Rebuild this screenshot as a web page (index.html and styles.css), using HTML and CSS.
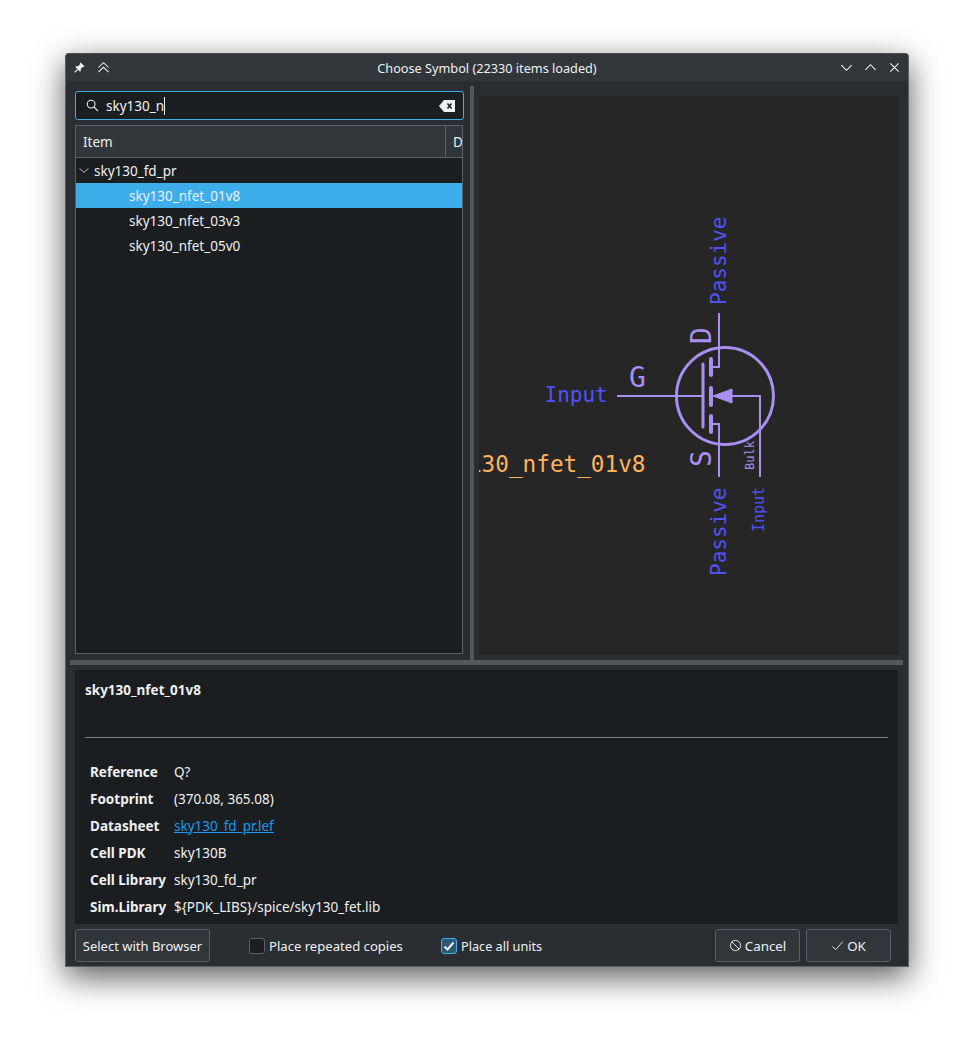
FILE: index.html
```html
<!DOCTYPE html>
<html lang="en">
<head>
  <meta charset="UTF-8" />
  <title>Choose Symbol</title>
  <link rel="stylesheet" href="styles.css">
</head>
<body>
  <div class="window">
    <div class="titlebar">
      <div class="title-side">
        <svg class="tb-icon" viewBox="0 0 14 14"><path d="M8.2 1.5 12.5 5.8 11.6 6.5 10.8 6.2 8.3 8.7 8.4 10.8 7.5 11.5 2.5 6.5 3.2 5.6 5.3 5.7 7.8 3.2 7.5 2.4Z" fill="#eff0f1"/><path d="M5 9 1.8 12.2" stroke="#eff0f1" stroke-width="1.2" fill="none"/></svg>
        <svg class="tb-icon" viewBox="0 0 14 14"><path d="M1.5 7 7 1.8 12.5 7M1.5 12 7 6.8 12.5 12" stroke="#eff0f1" stroke-width="1.1" fill="none"/></svg>
      </div>
      <div class="title-text">Choose Symbol (22330 items loaded)</div>
      <div class="title-side title-right">
        <svg class="tb-icon" viewBox="0 0 14 14"><path d="M1.5 4.5 7 10 12.5 4.5" stroke="#eff0f1" stroke-width="1.2" fill="none"/></svg>
        <svg class="tb-icon" viewBox="0 0 14 14"><path d="M1.5 9.5 7 4 12.5 9.5" stroke="#eff0f1" stroke-width="1.2" fill="none"/></svg>
        <svg class="tb-icon" viewBox="0 0 14 14"><path d="M2.5 2.5 11.5 11.5M11.5 2.5 2.5 11.5" stroke="#eff0f1" stroke-width="1.2" fill="none"/></svg>
      </div>
    </div>

    <div class="content">
      <div class="top-row">
        <div class="left-pane">
          <div class="search">
            <svg class="search-icon" viewBox="0 0 14 14"><circle cx="5.5" cy="5.5" r="4.2" stroke="#eff0f1" stroke-width="1.1" fill="none"/><path d="M8.6 8.6 13 13" stroke="#eff0f1" stroke-width="1.2"/></svg>
            <span class="search-text">sky130_n</span><span class="caret"></span>
            <svg class="clear-icon" viewBox="0 0 16 12"><path d="M5 0H16V12H5L0 6Z" fill="#eff0f1"/><path d="M8.5 3.5 12.5 8.5M12.5 3.5 8.5 8.5" stroke="#1b1e20" stroke-width="1.5"/></svg>
          </div>
          <div class="tree">
            <div class="tree-header">
              <div class="col-item">Item</div>
              <div class="col-desc">D</div>
            </div>
            <div class="tree-row group">
              <svg class="arrow" viewBox="0 0 12 8"><path d="M1 1.5 6 6.5 11 1.5" stroke="#eff0f1" stroke-width="1" fill="none"/></svg>
              sky130_fd_pr
            </div>
            <div class="tree-row leaf selected">sky130_nfet_01v8</div>
            <div class="tree-row leaf">sky130_nfet_03v3</div>
            <div class="tree-row leaf">sky130_nfet_05v0</div>
          </div>
        </div>
        <div class="vsplit"></div>
        <div class="preview">
          <svg class="symbol" viewBox="479 96 419 559">
            <g class="wires">
              <circle cx="725" cy="396" r="48.5" class="body-line"/>
              <path d="M617 396H703M719 313V367H711M719 477V424H711M732 396H760V477"/>
              <path d="M703 364V427" class="thick"/>
              <path d="M711 359V375M711 388V405M711 416V432" class="thick seg"/>
              <path d="M713 396 732 389V403Z" class="tip"/>
            </g>
            <text x="645.5" y="472" class="name" text-anchor="end">sky130_nfet_01v8</text>
            <text x="544.5" y="402" class="pin-type">Input</text>
            <text x="629" y="387" class="pin-name">G</text>
            <text transform="translate(726 305) rotate(-90)" class="pin-type">Passive</text>
            <text transform="translate(726 576) rotate(-90)" class="pin-type">Passive</text>
            <text transform="translate(764 532) rotate(-90)" class="pin-type small">Input</text>
            <text transform="translate(711 344) rotate(-90)" class="pin-name">D</text>
            <text transform="translate(711 467) rotate(-90)" class="pin-name">S</text>
            <text transform="translate(754 470) rotate(-90)" class="bulk">Bulk</text>
          </svg>
        </div>
      </div>
      <div class="hsplit"></div>
      <div class="details">
        <div class="sym-name">sky130_nfet_01v8</div>
        <hr class="rule">
        <div class="fields">
          <div class="field-label">Reference</div><div>Q?</div>
          <div class="field-label">Footprint</div><div>(370.08, 365.08)</div>
          <div class="field-label">Datasheet</div><div><a href="#" class="link">sky130_fd_pr.lef</a></div>
          <div class="field-label">Cell PDK</div><div>sky130B</div>
          <div class="field-label">Cell Library</div><div>sky130_fd_pr</div>
          <div class="field-label">Sim.Library</div><div>${PDK_LIBS}/spice/sky130_fet.lib</div>
        </div>
      </div>
      <div class="footer">
        <button class="btn browser-btn">Select with Browser</button>
        <label class="check first-check"><span class="box"></span>Place repeated copies</label>
        <label class="check second-check">
          <span class="box checked"><svg viewBox="0 0 14 14"><path d="M2.5 7.5 5.5 10.5 11.5 3.5" stroke="#eff0f1" stroke-width="2" fill="none"/></svg></span>Place all units
        </label>
        <button class="btn action-btn cancel-btn">
          <svg class="btn-icon" viewBox="0 0 14 14"><circle cx="7" cy="7" r="5.5" stroke="#eff0f1" fill="none"/><path d="M3 3 11 11" stroke="#eff0f1"/></svg>Cancel
        </button>
        <button class="btn action-btn">
          <svg class="btn-icon" viewBox="0 0 14 14"><path d="M1.5 8 5 11.5 12.5 3" stroke="#eff0f1" fill="none"/></svg>OK
        </button>
      </div>
    </div>
  </div>
</body>
</html>
```

FILE: styles.css
```css
* {
  box-sizing: border-box;
}

html,
body {
  height: 100%;
}

body {
  margin: 0;
  padding: 53px 0 0 65px;
  background: #fff;
  font-family: "Noto Sans", sans-serif;
  font-size: 13.5px;
  color: #eff0f1;
  overflow: hidden;
}

.window {
  width: 844px;
  height: 914px;
  display: flex;
  flex-direction: column;
  background: #2a2e32;
  border: 1px solid #5a6066;
  border-top-color: #4a5056;
  border-radius: 4px 4px 0 0;
  box-shadow: 0 10px 32px rgba(0, 0, 0, 0.65);
}

/* title bar */
.titlebar {
  height: 27px;
  flex: none;
  display: flex;
  align-items: center;
  background: #31363b;
  border-radius: 4px 4px 0 0;
}

.title-side {
  flex: 1;
  display: flex;
  align-items: center;
  gap: 11px;
  padding: 0 7px;
}

.title-right {
  justify-content: flex-end;
}

.tb-icon {
  width: 13px;
  height: 13px;
}

.title-text {
  flex: none;
  text-align: center;
  font-size: 12.7px;
}

/* main area */
.content {
  flex: 1;
  display: flex;
  flex-direction: column;
  padding: 5px 4px 0;
  min-height: 0;
}

.top-row {
  height: 574px;
  flex: none;
  display: flex;
}

.left-pane {
  width: 399px;
  flex: none;
  padding: 5px 0 6px 5px;
  display: flex;
  flex-direction: column;
  gap: 5px;
}

.search {
  width: 389px;
  height: 29px;
  flex: none;
  display: flex;
  align-items: center;
  padding: 0 8px 0 10px;
  background: #1b1e20;
  border: 1px solid #3daee9;
  border-radius: 3px;
}

.search-icon {
  width: 13px;
  height: 13px;
  margin-right: 7px;
}

.caret {
  width: 1px;
  height: 18px;
  background: #eff0f1;
}

.clear-icon {
  width: 16px;
  height: 12px;
  margin-left: auto;
}

.tree {
  width: 388px;
  flex: 1;
  background: #1b1e20;
  border: 1px solid #5a6066;
  overflow: hidden;
}

.tree-header {
  height: 32px;
  display: flex;
  align-items: center;
  background: #31363b;
  border-bottom: 1px solid #5a6066;
}

.col-item {
  width: 370px;
  height: 100%;
  display: flex;
  align-items: center;
  padding-left: 7px;
  flex: none;
  border-right: 1px solid #5a6066;
}

.col-desc {
  padding-left: 7px;
}

.tree-row {
  height: 25px;
  display: flex;
  align-items: center;
}

.group {
  padding-left: 3px;
}

.arrow {
  width: 10px;
  height: 7px;
  margin-right: 5px;
}

.leaf {
  padding-left: 53px;
}

.selected {
  background: #3daee9;
}

.vsplit {
  width: 4px;
  flex: none;
  background: #53585c;
  margin-left: 1px;
}

.preview {
  width: 419px;
  height: 559px;
  margin: 10px 0 0 5px;
  background: #262626;
  flex: none;
  overflow: hidden;
}

.symbol {
  display: block;
  width: 419px;
  height: 559px;
  font-family: "DejaVu Sans Mono", monospace;
}

.wires {
  fill: none;
  stroke: #a98ff0;
  stroke-width: 2;
}

.body-line {
  stroke-width: 3;
}

.thick {
  stroke-width: 3;
  stroke-linecap: round;
}

.seg {
  stroke-width: 4;
}

.tip {
  fill: #a98ff0;
  stroke-width: 1;
}

.name {
  font-size: 22.7px;
  fill: #ffb35c;
}

.pin-type {
  font-size: 21px;
  fill: #5152f7;
}

.pin-type.small {
  font-size: 15px;
}

.pin-name {
  font-size: 28px;
  fill: #a98ff0;
}

.bulk {
  font-size: 12px;
  fill: #a98ff0;
}

.hsplit {
  height: 5px;
  flex: none;
  background: #53585c;
  margin-right: 1px;
}

/* symbol details */
.details {
  height: 254px;
  flex: none;
  margin: 5px 6px 0 5px;
  padding: 10px 10px 0;
  background: #1b1e20;
}

.sym-name {
  font-weight: 700;
  line-height: 20px;
}

.rule {
  border: 0;
  border-top: 1px solid #7a7e82;
  margin: 37px 0 0;
}

.fields {
  display: grid;
  grid-template-columns: 84px 1fr;
  grid-auto-rows: 27px;
  align-items: center;
  margin-top: 20px;
  padding-left: 5px;
}

.field-label {
  font-weight: 700;
}

.link {
  color: #1d99f3;
}

/* bottom bar */
.footer {
  flex: 1;
  display: flex;
  align-items: center;
  padding: 5px 13px 4px 5px;
  font-size: 13.1px;
}

.btn {
  height: 33px;
  display: flex;
  align-items: center;
  justify-content: center;
  padding: 0;
  background: #31363b;
  color: #eff0f1;
  border: 1px solid #5a6066;
  border-radius: 3px;
  font-family: inherit;
  font-size: 13.33px;
  white-space: nowrap;
}

.browser-btn {
  width: 135px;
  font-size: 13px;
}

.check {
  display: flex;
  align-items: center;
}

.first-check {
  margin-left: 39px;
  width: 192px;
}

.second-check {
  margin-right: auto;
  font-size: 12.7px;
}

.box {
  width: 16px;
  height: 16px;
  margin-right: 4px;
  background: #1b1e20;
  border: 1px solid #5a6066;
  border-radius: 3px;
}

.box.checked {
  background: #2c5a75;
  border-color: #3daee9;
}

.box svg {
  display: block;
  width: 14px;
  height: 14px;
}

.action-btn {
  width: 85px;
}

.cancel-btn {
  margin-right: 6px;
}

.btn-icon {
  width: 13px;
  height: 13px;
  margin-right: 3px;
}
```
